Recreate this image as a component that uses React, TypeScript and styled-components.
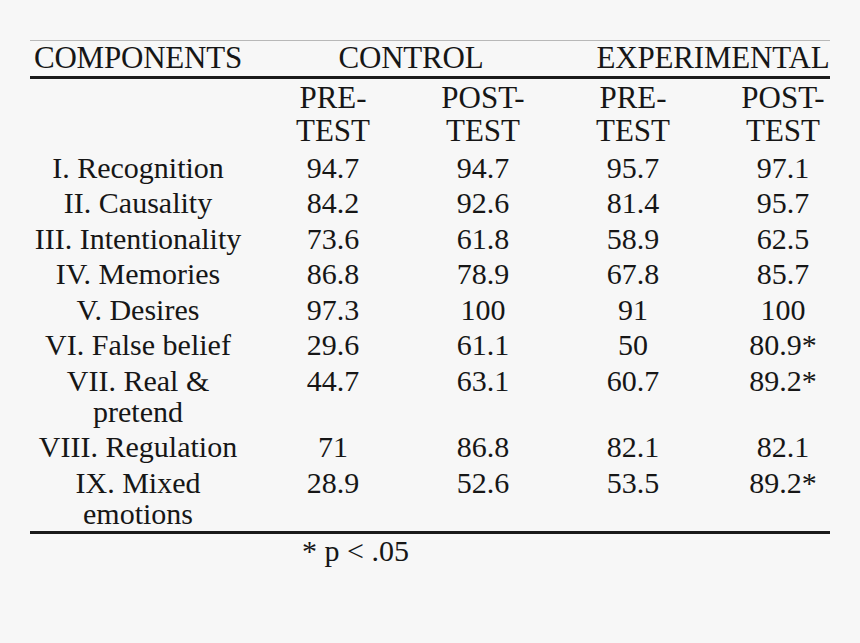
import styled, { createGlobalStyle } from "styled-components";

interface ResultRow {
  label: string;
  values: string[];
}

const rows: ResultRow[] = [
  { label: "I. Recognition", values: ["94.7", "94.7", "95.7", "97.1"] },
  { label: "II. Causality", values: ["84.2", "92.6", "81.4", "95.7"] },
  { label: "III. Intentionality", values: ["73.6", "61.8", "58.9", "62.5"] },
  { label: "IV. Memories", values: ["86.8", "78.9", "67.8", "85.7"] },
  { label: "V. Desires", values: ["97.3", "100", "91", "100"] },
  { label: "VI. False belief", values: ["29.6", "61.1", "50", "80.9*"] },
  { label: "VII. Real &\npretend", values: ["44.7", "63.1", "60.7", "89.2*"] },
  { label: "VIII. Regulation", values: ["71", "86.8", "82.1", "82.1"] },
  { label: "IX. Mixed\nemotions", values: ["28.9", "52.6", "53.5", "89.2*"] },
];

export default function App() {
  return (
    <>
      <GlobalStyle />
      <Page>
        <Table>
          <GroupRow>
            <GroupCell $shift={-12}>COMPONENTS</GroupCell>
            <GroupCell $shift={6}>CONTROL</GroupCell>
            <GroupCell $shift={38}>EXPERIMENTAL</GroupCell>
          </GroupRow>
          <SubRow>
            <Cell $col={0} />
            <Cell $col={1}>PRE-<br />TEST</Cell>
            <Cell $col={2}>POST-<br />TEST</Cell>
            <Cell $col={3}>PRE-<br />TEST</Cell>
            <Cell $col={4}>POST-<br />TEST</Cell>
          </SubRow>
          <Body>
            {rows.map((r) => (
              <DataRow key={r.label}>
                <Cell $col={0}>{r.label}</Cell>
                {r.values.map((v, i) => (
                  <Cell key={i} $col={i + 1}>{v}</Cell>
                ))}
              </DataRow>
            ))}
          </Body>
          <Footnote>* p &lt; .05</Footnote>
        </Table>
      </Page>
    </>
  );
}

const GlobalStyle = createGlobalStyle`
  html, body {
    margin: 0;
    background: #f7f7f7;
  }
`

const Page = styled.div`
  padding: 40px 0 0 30px;
  min-height: 603px;
  font-family: "Liberation Serif", "Times New Roman", serif;
  color: #161616;
`

const Table = styled.div`
  width: 800px;
  border-top: 1px solid #b8b8b8;
`

const GroupRow = styled.div`
  display: grid;
  grid-template-columns: 228px 300px 272px;
  padding-bottom: 2px;
  border-bottom: 3px solid #1a1a1a;
  font-size: 31px;
  line-height: 33px;
`

const GroupCell = styled.div<{ $shift: number }>`
  text-align: center;
  white-space: nowrap;
  letter-spacing: -0.2px;
  padding-left: ${(p) => (p.$shift > 0 ? p.$shift : 0)}px;
  padding-right: ${(p) => (p.$shift < 0 ? -p.$shift : 0)}px;
`

const Grid = styled.div`
  display: grid;
  grid-template-columns: 228px 150px 150px 150px 122px;
`

const SubRow = styled(Grid)`
  padding: 1.5px 0 3px;
  font-size: 31px;
  line-height: 33px;
`

const Body = styled.div`
  border-bottom: 3px solid #1a1a1a;
`

const DataRow = styled(Grid)`
  padding: 2.25px 0;
  font-size: 30px;
  line-height: 31px;
`

const Cell = styled.div<{ $col: number }>`
  text-align: center;
  white-space: pre-line;
  padding-right: ${(p) => (p.$col === 0 ? 12 : 0)}px;
  padding-left: ${(p) => (p.$col === 4 ? 28 : 0)}px;
`

const Footnote = styled.div`
  padding-left: 272px;
  font-size: 30px;
  line-height: 33px;
`
